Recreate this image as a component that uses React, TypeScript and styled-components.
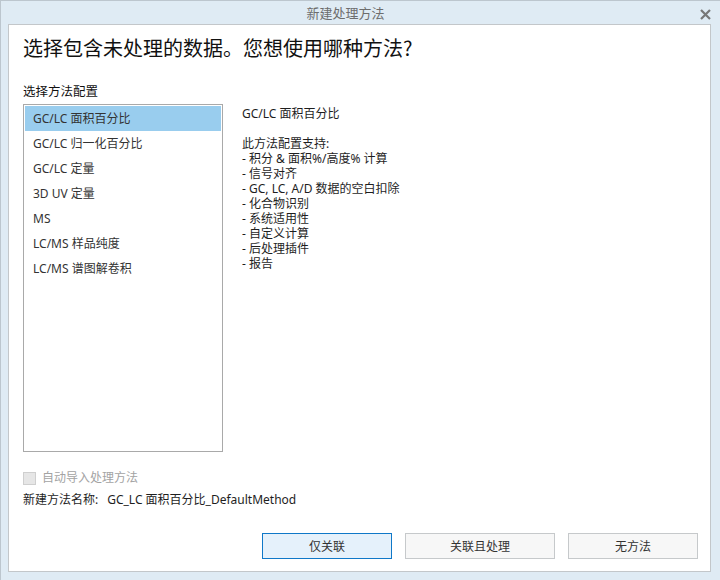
import React from "react";
import styled, { createGlobalStyle } from "styled-components";

const Global = createGlobalStyle`
  html, body { margin: 0; padding: 0; }
  body {
    font-family: "Segoe UI", "Noto Sans", "Noto Sans CJK SC", sans-serif;
    color: #1e1e1e;
  }
`;

const Window = styled.div`
  width: 720px;
  height: 580px;
  box-sizing: border-box;
  background: #dfebf4;
  border-top: 1px solid #bcc6ce;
  border-left: 1px solid #bcc6ce;
  display: flex;
  flex-direction: column;
`;

const TitleBar = styled.div`
  height: 23px;
  position: relative;
  display: flex;
  align-items: center;
  justify-content: center;
  padding-right: 30px;
  font-size: 13px;
  color: #6d6d6d;
  font-family: "Noto Sans CJK SC", sans-serif;
`;

const Close = styled.div`
  position: absolute;
  right: 9px;
  top: 8px;
  width: 11px;
  height: 11px;
  display: flex;
`;

const Panel = styled.div`
  margin: 0 9px 8px 7px;
  flex: 1;
  background: #ffffff;
  border: 1px solid #c3c7ca;
  padding: 0 12px 12px 14px;
  display: flex;
  flex-direction: column;
`;

const Heading = styled.div`
  margin-top: 9px;
  font-size: 20px;
  line-height: 28px;
  color: #111;
  font-family: "Noto Sans CJK SC", sans-serif;
`;

const Label = styled.div`
  margin-top: 21px;
  font-size: 12.5px;
  line-height: 16px;
  color: #111;
  font-family: "Noto Sans CJK SC", sans-serif;
`;

const Body = styled.div`
  margin-top: 5px;
  display: flex;
  gap: 19px;
`;

const List = styled.div`
  width: 196px;
  height: 344px;
  border: 1px solid #a9a9a9;
  padding: 1px 1px;
  box-sizing: content-box;
  display: flex;
  flex-direction: column;
`;

const Item = styled.div<{ $selected?: boolean }>`
  height: 25px;
  line-height: 25px;
  padding-left: 8px;
  font-size: 12px;
  color: #333;
  background: ${(p) => (p.$selected ? "#99cdee" : "transparent")};
`;

const Desc = styled.div`
  padding-top: 2px;
  font-size: 12px;
  line-height: 15px;
  color: #1e1e1e;
`;

const DescLine = styled.div`
  height: 15px;
  white-space: pre;
`;

const CheckRow = styled.label`
  margin-top: 18px;
  display: flex;
  align-items: center;
  gap: 6px;
  font-size: 12px;
  line-height: 16px;
  color: #a3a3a3;
`;

const Box = styled.span`
  width: 11px;
  height: 11px;
  border: 1px solid #cfcfcf;
  background: #e6e6e6;
  display: inline-block;
`;

const NameRow = styled.div`
  margin-top: 6px;
  display: flex;
  gap: 9px;
  font-size: 12px;
  line-height: 16px;
  color: #1e1e1e;
`;

const Buttons = styled.div`
  margin-top: auto;
  display: flex;
  justify-content: flex-end;
  gap: 13px;
`;

const Button = styled.button<{ $primary?: boolean; $w: number }>`
  width: ${(p) => p.$w}px;
  height: 26px;
  box-sizing: border-box;
  font-family: "Segoe UI", "Noto Sans", "Noto Sans CJK SC", sans-serif;
  font-size: 12px;
  color: #333;
  background: ${(p) => (p.$primary ? "#e5f1fb" : "#f7f7f7")};
  border: 1px solid ${(p) => (p.$primary ? "#0f78c8" : "#c6c9cb")};
  padding: 0;
`;

const items = [
  "GC/LC 面积百分比",
  "GC/LC 归一化百分比",
  "GC/LC 定量",
  "3D UV 定量",
  "MS",
  "LC/MS 样品纯度",
  "LC/MS 谱图解卷积",
];

const desc = [
  "GC/LC 面积百分比",
  "",
  "此方法配置支持:",
  "- 积分 & 面积%/高度% 计算",
  "- 信号对齐",
  "- GC, LC, A/D 数据的空白扣除",
  "- 化合物识别",
  "- 系统适用性",
  "- 自定义计算",
  "- 后处理插件",
  "- 报告",
];

export default function App() {
  return (
    <>
      <Global />
      <Window>
        <TitleBar>
          新建处理方法
          <Close>
            <svg width="11" height="11" viewBox="0 0 11 11">
              <path d="M1 1 L10 10 M10 1 L1 10" stroke="#777" strokeWidth="2.2" />
            </svg>
          </Close>
        </TitleBar>
        <Panel>
          <Heading>选择包含未处理的数据。您想使用哪种方法?</Heading>
          <Label>选择方法配置</Label>
          <Body>
            <List>
              {items.map((t, i) => (
                <Item key={t} $selected={i === 0}>
                  {t}
                </Item>
              ))}
            </List>
            <Desc>
              {desc.map((d, i) => (
                <DescLine key={i}>{d}</DescLine>
              ))}
            </Desc>
          </Body>
          <CheckRow>
            <Box />
            自动导入处理方法
          </CheckRow>
          <NameRow>
            <span>新建方法名称:</span>
            <span>GC_LC 面积百分比_DefaultMethod</span>
          </NameRow>
          <Buttons>
            <Button $primary $w={130}>仅关联</Button>
            <Button $w={150}>关联且处理</Button>
            <Button $w={130}>无方法</Button>
          </Buttons>
        </Panel>
      </Window>
    </>
  );
}
